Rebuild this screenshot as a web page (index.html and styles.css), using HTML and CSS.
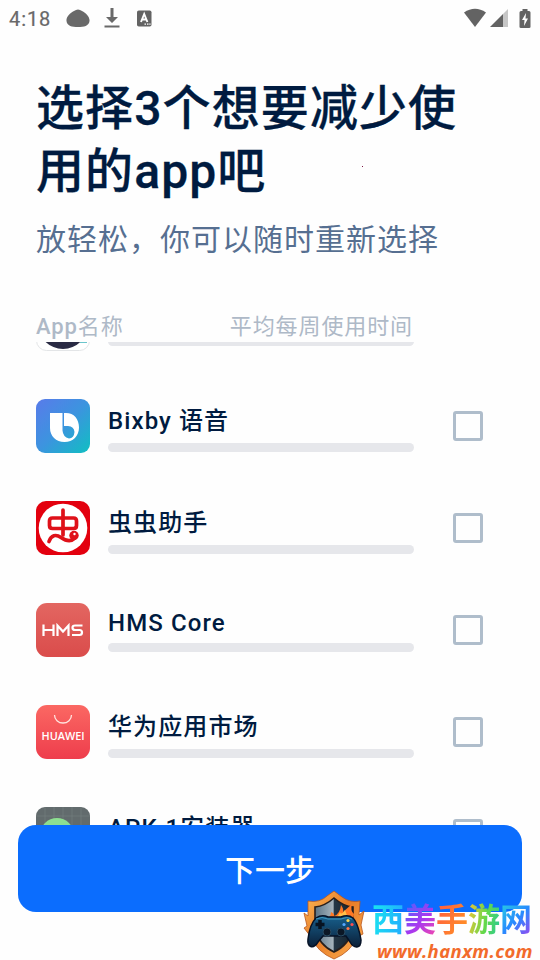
FILE: index.html
```html
<!DOCTYPE html>
<html lang="zh-CN">
<head>
<meta charset="utf-8">
<title>选择app</title>
<link rel="stylesheet" href="styles.css">
</head>
<body>
<div class="screen">
  <header class="status">
    <span class="clock">4:18</span>
    <svg class="s-blob" width="24" height="19" viewBox="0 0 24 19"><path d="M8 2Q12-1 16 2C20 4 24 8 23.500 12C23 17 18 18 12 18S1 17 .5 12C0 8 4 4 8 2Z" fill="#696969"/></svg>
    <svg class="s-down" width="16" height="22" viewBox="0 0 16 22"><path d="M6.500 1h3v9H14l-6 6-6-6h4.500zM.5 18.500h15v2H.5z" fill="#696969"/></svg>
    <svg class="s-a" width="15" height="17" viewBox="0 0 15 17"><rect y=".5" width="14.500" height="16" rx="1.800" fill="#636363"/><path d="M4 12L7.200 4 10.400 12M5 9.500h4.500" fill="none" stroke="#fff" stroke-width="1.900"/><path d="M7.500 14.200H9M10 14.200h1.500M12.300 14.200h1.300" stroke="#fff" stroke-width="1.200"/></svg>
    <span class="grow"></span>
    <svg width="24" height="20" viewBox="0 0 24 20"><path d="M1 4.500Q12-3 23 4.500L12 19Z" fill="#636363"/></svg>
    <svg class="s-cell" width="19" height="19" viewBox="0 0 19 19"><path d="M13 5l5-5v18h-5z" fill="#c6c6c6"/><path d="M0 18L13 5v13z" fill="#636363"/></svg>
    <svg class="s-bat" width="12" height="21" viewBox="0 0 12 21"><path d="M3.500 1h5v2H10q1.500 0 1.500 1.500V19q0 1-1.500 1H2Q.5 20 .5 19V4.500Q.5 3 2 3h1.500z" fill="#636363"/><path d="M7 5L3 12h2.500L5 18l4-7.500H6.500z" fill="#fff"/></svg>
  </header>
  <main>
    <h1>选择3个想要减少使用的app吧</h1>
    <p class="sub">放轻松，你可以随时重新选择</p>
    <div class="heads"><span><b>App</b>名称</span><span>平均每周使用时间</span></div>
    <div class="list">
      <div class="row">
        <svg class="icon" viewBox="0 0 54 54"><rect x=".5" y=".5" width="53" height="53" rx="10" fill="#fff" stroke="#e3e5e7"/><circle cx="27" cy="27" r="25" fill="#292a43"/><path d="M44 45.500h7" stroke="#6bc5cc"/></svg>
        <div class="info"><div class="name latin">&nbsp;</div><div class="bar"></div></div>
        <span class="check"></span>
      </div>
      <div class="row">
        <svg class="icon" viewBox="0 0 54 54"><defs><linearGradient id="bx" x1="0" y1="0" x2="1" y2="1"><stop stop-color="#597bea"/><stop offset=".5" stop-color="#3c94df"/><stop offset="1" stop-color="#10bfc2"/></linearGradient></defs><rect width="54" height="54" rx="9" fill="url(#bx)"/><path d="M14 14H26.500V31.500Q27 38 33 39.500Q38 39 38.500 33Q38 27.500 32 27H28V14H30C38 14 43 20 43 28.500C43 37 37 43 28.500 43S14 37 14 29Z" fill="#fff"/></svg>
        <div class="info"><div class="name">Bixby 语音</div><div class="bar"></div></div>
        <span class="check"></span>
      </div>
      <div class="row">
        <svg class="icon" viewBox="0 0 54 54"><rect width="54" height="54" rx="10" fill="#e3000e"/><circle cx="27" cy="27" r="24.300" fill="#fff"/><g fill="none" stroke="#df1119" stroke-width="3.700" stroke-linecap="round" stroke-linejoin="round"><path d="M27 9v25M16.500 17h21q3 0 3 3v4.500q0 3-3 3h-21q-3 0-3-3V20q0-3 3-3z"/><path d="M13 40.500C15 34 20 33 25 36.500S35 41 39 37"/></g><circle cx="38" cy="34.500" r="4.700" fill="#df1119"/><circle cx="38.500" cy="33" r="1.200" fill="#fff"/></svg>
        <div class="info"><div class="name">虫虫助手</div><div class="bar"></div></div>
        <span class="check"></span>
      </div>
      <div class="row">
        <svg class="icon" viewBox="0 0 54 54"><defs><linearGradient id="hm" x2="0" y2="1"><stop stop-color="#e36661"/><stop offset="1" stop-color="#da4c4b"/></linearGradient></defs><rect width="54" height="54" rx="11" fill="url(#hm)"/><path d="M7.500 21.500v11.500M17.500 21.500v11.500M7.500 27h10M21.500 33V22.500l5.500 6 5.500-6V33M46.500 22.500H39q-2.500 0-2.500 2.200T39 27h4.500q2.500 0 2.500 2.500T43.500 32H36" fill="none" stroke="#fff" stroke-width="2.200"/></svg>
        <div class="info"><div class="name latin">HMS Core</div><div class="bar"></div></div>
        <span class="check"></span>
      </div>
      <div class="row">
        <svg class="icon" viewBox="0 0 54 54"><defs><linearGradient id="hw" x2="0" y2="1"><stop stop-color="#fb6863"/><stop offset="1" stop-color="#ee3d4c"/></linearGradient></defs><rect width="54" height="54" rx="11" fill="url(#hw)"/><path d="M18.500 10a8.500 8 0 0 0 17 0" fill="none" stroke="#ffe4df" stroke-width="1.300"/><text class="hw-text" x="27" y="34.500" text-anchor="middle" textLength="43" lengthAdjust="spacingAndGlyphs">HUAWEI</text></svg>
        <div class="info"><div class="name">华为应用市场</div><div class="bar"></div></div>
        <span class="check"></span>
      </div>
      <div class="row">
        <svg class="icon" viewBox="0 0 54 54"><rect width="54" height="54" rx="9" fill="#626b6d"/><path d="M0 9h54M9 0v54M18 0v54M27 0v54M36 0v54M45 0v54" stroke="#778280" stroke-width=".6"/><circle cx="21" cy="28" r="17" fill="#8ddf91"/></svg>
        <div class="info"><div class="name apk">APK.1安装器</div><div class="bar"></div></div>
        <span class="check"></span>
      </div>
    </div>
  </main>
  <span class="speck"></span>
  <div class="next">下一步</div>
  <div class="mark">
    <svg width="62" height="70" viewBox="0 0 62 70">
      <defs><linearGradient id="go" x2="1" y2="1"><stop stop-color="#ffbd59"/><stop offset=".45" stop-color="#e67a26"/><stop offset="1" stop-color="#ffb151"/></linearGradient><linearGradient id="st" x2="1"><stop stop-color="#5b7486"/><stop offset=".48" stop-color="#a6b4bd"/><stop offset=".5" stop-color="#253746"/><stop offset="1" stop-color="#14222d"/></linearGradient><linearGradient id="pad" x2="0" y2="1"><stop stop-color="#17608d"/><stop offset="1" stop-color="#0b1f38"/></linearGradient></defs>
      <path d="M31 1l8 6q8 6 18 4l-1 14 5-4-3 14 2 9-6 3q-6 15-23 22Q14 62 8 47l-7-9 3-2-3-13 4 3V11q12 2 19-5z" fill="url(#go)" stroke="#b9551c" stroke-width=".8"/>
      <path d="M31 8q9 8 19 9v22q-4 16-19 23Q16 55 12 39V17q10-1 19-9z" fill="url(#st)" stroke="#281f1c" stroke-width="1.600"/>
      <path d="M20 29q8 0 8-7 4 2 3 4 6-2 7-11 3 4 2 7l9-8q-2 7 2 10l-1 8H20z" fill="#ff7824"/><path d="M29 29q6-1 8-7 1 4 5-2 1 5 5 9H29z" fill="#ffc04a"/>
      <path d="M13 28q6-4 12-1h13q7-3 12 1c4 4 7 15 8 22 0 9-7 9-11 2l-4-6H20l-5 6C10 60 4 57 5 49c1-8 4-17 8-21z" fill="url(#pad)" stroke="#061226" stroke-width="1.500"/>
      <path d="M13 29q6-3 12 0h13q6-3 11 0" fill="none" stroke="#4098bd"/>
      <path d="M17 30v9M12.500 34.500h9" stroke="#071321" stroke-width="3.500"/><circle cx="24" cy="42" r="4" fill="#0b1726" stroke="#294b62"/><circle cx="38" cy="42" r="4" fill="#0b1726" stroke="#294b62"/><circle cx="45" cy="30.500" r="1.600" fill="#ffd64d"/><circle cx="41" cy="34.500" r="1.600" fill="#54a8ff"/><circle cx="49" cy="34.500" r="1.600" fill="#ff4d4d"/><circle cx="45" cy="38.500" r="1.600" fill="#ff7448"/>
    </svg>
    <div class="words"><div class="brand"><span class="c1">西</span><span class="c2">美</span><span class="c3">手</span><span class="c4">游</span><span class="c5">网</span></div><div class="url">www.hanxm.com</div></div>
  </div>
</div>
</body>
</html>
```
FILE: styles.css
```css
* { box-sizing: border-box; }
body { margin: 0; background: #fefefe; font-family: Roboto, "Noto Sans CJK SC", sans-serif; }
.screen { position: relative; width: 540px; height: 960px; overflow: hidden; }
.status { display: flex; align-items: center; height: 36px; padding: 0 9px; color: #696969; }
.clock { width: 57px; font-size: 20px; letter-spacing: .9px; line-height: 36px; padding-top: 2px; -webkit-text-stroke: .2px #696969; }
.s-down { margin-left: 14px; }
.s-a { margin-left: 17px; }
.grow { flex: 1; }
.s-cell { margin-left: 3px; }
.s-bat { margin-left: 10px; }
main { padding: 41px 36px 0; }
h1 { margin: 0; height: 125px; color: #001b40; font-size: 48px; font-weight: 500; line-height: 63px; letter-spacing: 1.1px; width: 440px; -webkit-text-stroke: .3px #001b40; }
.sub { margin: 15px 0 0; height: 46px; color: #566f91; font-size: 30px; line-height: 46px; letter-spacing: 1px; white-space: nowrap; }
.heads { display: flex; justify-content: space-between; width: 377px; height: 34px; margin-top: 45px; color: #aeb9c7; font-size: 22px; line-height: 37px; letter-spacing: .9px; }
.heads b { font-weight: 500; }
.list { height: 500px; overflow: hidden; }
.row { display: grid; grid-template-columns: 54px 306px 30px; column-gap: 18px; height: 54px; margin-bottom: 48px; }
.row:first-child { margin-top: -45px; }
.icon { display: block; width: 54px; height: 54px; }
.name { height: 44px; color: #001b40; font-size: 24px; font-weight: 500; line-height: 44px; letter-spacing: 1.1px; white-space: nowrap; }
.name.latin { height: 40px; line-height: 40px; }
.name.apk { line-height: 42px; }
.bar { height: 9px; border-radius: 5px; background: #e6e7eb; }
.check { width: 30px; height: 30px; margin: 12px 0 0 21px; border: 3px solid #afbdcb; border-radius: 3px; }
.hw-text { fill: #fff; font: 600 10px "Open Sans", sans-serif; }
.speck { position: absolute; left: 362px; top: 166px; width: 1px; height: 1px; background: #7c1644; }
.next { position: absolute; left: 18px; top: 825px; width: 504px; height: 87px; border-radius: 18px; background: #0b6dfe; color: #fff; font-size: 30px; font-weight: 500; line-height: 91px; text-align: center; }
.mark { position: absolute; left: 303px; top: 890px; display: flex; }
.words { margin: 12px 0 0 7px; }
.brand { display: flex; height: 36px; font-size: 32px; line-height: 37px; font-weight: 700; }
.brand span { width: 32px; background-clip: text; -webkit-background-clip: text; color: transparent; }
.c1 { background-image: linear-gradient(100deg, #18e8ef, #23a8ff); }
.c2 { background-image: linear-gradient(135deg, #4b65ff, #a938ef 55%, #fa4aa5); }
.c3 { background-image: linear-gradient(120deg, #ff5a42, #ff9821); }
.c4 { background-image: linear-gradient(100deg, #f4c334, #62d94b 55%, #24c99b); }
.c5 { background-image: linear-gradient(135deg, #28d4df, #288aff 50%, #a63eee); }
.url { margin-left: 5px; height: 22px; color: #f26b2b; font: italic 700 18.5px/25px "Open Sans", sans-serif; letter-spacing: .4px; white-space: nowrap; }
```
